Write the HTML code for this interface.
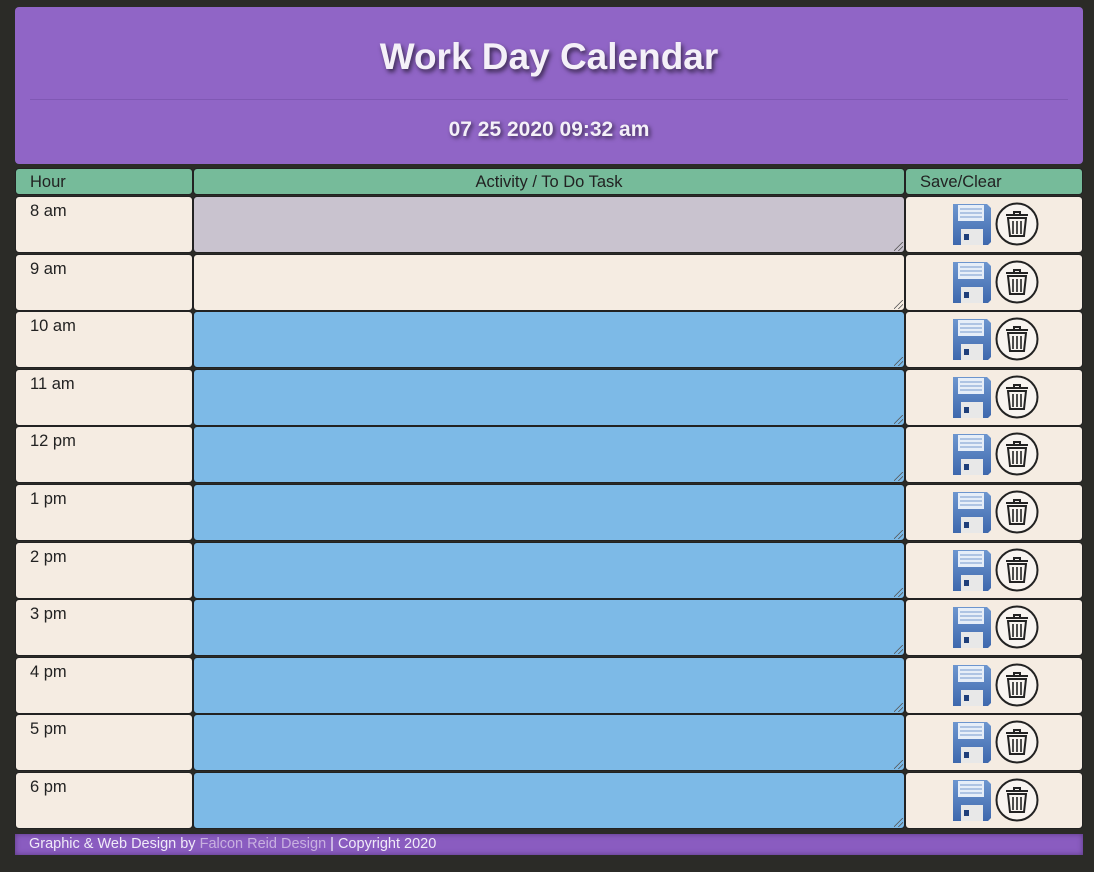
<!DOCTYPE html>
<html><head><style>
body{margin:0;background:#2b2b27;width:1094px;height:872px;position:relative;overflow:hidden;font-family:"Liberation Sans",sans-serif;}
.hdr{position:absolute;left:15px;top:7px;width:1068px;height:157px;background:#9065c6;border-radius:4px;}
.hdr h1{margin:0;position:absolute;top:29px;width:100%;text-align:center;font-size:37px;color:#f4f0f8;font-weight:bold;text-shadow:2px 3px 5px rgba(0,0,0,.6);}
.hdr hr{position:absolute;top:92px;left:15px;width:1038px;margin:0;border:0;border-top:1px solid #8058b4;}
.hdr .d{position:absolute;top:111px;width:100%;text-align:center;font-size:21px;font-weight:bold;color:#f4f0f8;text-shadow:2px 2px 4px rgba(0,0,0,.6);}
.c{position:absolute;box-sizing:border-box;border:1.5px solid #222;border-radius:4px;font-size:16.5px;color:#222;}
.th{background:#76bb9a;top:168px;height:27px;line-height:26px;}
.h{background:#f5ece2;padding:5px 0 0 14px;}
.s{background:#f5ece2;}
.grip{position:absolute;right:1px;bottom:1px;width:9px;height:9px;background:linear-gradient(135deg,transparent 45%,#555 46%,#555 52%,transparent 53%,transparent 70%,#555 71%,#555 77%,transparent 78%);}
.foot{position:absolute;left:15px;top:834px;width:1068px;height:21px;background:#8a5cc0;box-shadow:inset 0 0 6px #5a3a80;color:#f0eaf8;font-size:14.5px;line-height:21px;padding-left:14px;box-sizing:border-box;}
.foot span{color:#c8b0e0;}
</style></head><body>
<div class="hdr"><h1>Work Day Calendar</h1><hr><div class="d">07 25 2020 09:32 am</div></div>
<div class="c th" style="left:15px;width:178px;padding-left:14px">Hour</div>
<div class="c th" style="left:193px;width:712px;text-align:center">Activity / To Do Task</div>
<div class="c th" style="left:905px;width:178px;padding-left:14px">Save/Clear</div>
<div id="rows"></div>
<div class="foot">Graphic &amp; Web Design by <span>Falcon Reid Design</span> | Copyright 2020</div>
<script>
var labels=["8 am","9 am","10 am","11 am","12 pm","1 pm","2 pm","3 pm","4 pm","5 pm","6 pm"];
var h="";
for(var i=0;i<11;i++){
var t=Math.round(196+i*57.6);
var bg=i==0?"#c9c3cf":(i==1?"#f5ece2":"#7dbae7");
h+='<div class="c h" style="left:15px;width:178px;top:'+t+'px;height:57px">'+labels[i]+'</div>';
h+='<div class="c" style="left:193px;width:712px;top:'+t+'px;height:57px;background:'+bg+'"><div class="grip"></div></div>';
h+='<div class="c s" style="left:905px;width:178px;top:'+t+'px;height:57px">'+
'<svg width="178" height="57" style="position:absolute;left:-1.5px;top:-1.5px">'+
'<defs><linearGradient id="g'+i+'" x1="0" y1="0" x2="0" y2="1"><stop offset="0" stop-color="#6d96cf"/><stop offset="1" stop-color="#3e68ad"/></linearGradient></defs>'+
'<path d="M48 8h34l4 4v34l-3 3H48z" fill="url(#g'+i+')"/>'+
'<rect x="53" y="9" width="26" height="16" fill="#e6eef8"/>'+
'<path d="M55 13h22M55 17h22M55 21h22" stroke="#9bb5dc" stroke-width="1.5"/>'+
'<rect x="56" y="33" width="22" height="16" fill="#e8e8e8"/>'+
'<rect x="59" y="38" width="5" height="6" fill="#1f3f7a"/>'+
'<circle cx="112" cy="28" r="20.5" fill="#f8f4f0" stroke="#222" stroke-width="2"/>'+
'<path d="M101 19h22M109 19v-3h6v3" fill="none" stroke="#222" stroke-width="2"/>'+
'<path d="M103 22h18l-2 18h-14z" fill="none" stroke="#222" stroke-width="2"/>'+
'<path d="M108 25v13M112 25v13M116 25v13" stroke="#222" stroke-width="1.6"/>'+
'</svg></div>';
}
document.getElementById("rows").innerHTML=h;
</script>
</body></html>
